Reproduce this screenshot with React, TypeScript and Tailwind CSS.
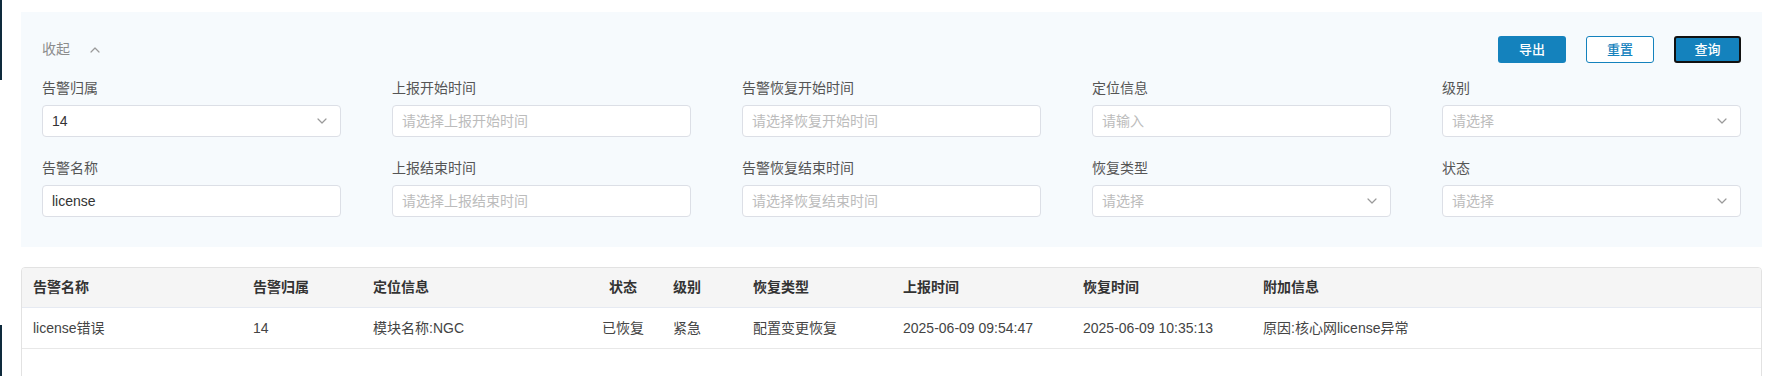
import React from 'react';

const FONT = { fontFamily: '"Liberation Sans", "Noto Sans CJK SC", sans-serif' };

const Chevron = ({ up }: { up?: boolean }) => (
  <svg width="10" height="6" viewBox="0 0 10 6" fill="none" className={up ? 'rotate-180' : ''}>
    <path d="M1 1l4 4 4-4" stroke="#9a9a9a" strokeWidth="1.2" strokeLinecap="round" strokeLinejoin="round" />
  </svg>
);

type Field = { label: string; value?: string; placeholder?: string; select?: boolean };

const FIELDS: Field[] = [
  { label: '告警归属', value: '14', select: true },
  { label: '上报开始时间', placeholder: '请选择上报开始时间' },
  { label: '告警恢复开始时间', placeholder: '请选择恢复开始时间' },
  { label: '定位信息', placeholder: '请输入' },
  { label: '级别', placeholder: '请选择', select: true },
  { label: '告警名称', value: 'license' },
  { label: '上报结束时间', placeholder: '请选择上报结束时间' },
  { label: '告警恢复结束时间', placeholder: '请选择恢复结束时间' },
  { label: '恢复类型', placeholder: '请选择', select: true },
  { label: '状态', placeholder: '请选择', select: true },
];

const COLS = [
  { key: 'name', title: '告警名称', w: 'w-[220px]' },
  { key: 'owner', title: '告警归属', w: 'w-[120px]' },
  { key: 'loc', title: '定位信息', w: 'w-[200px]' },
  { key: 'status', title: '状态', w: 'w-[100px]', right: true },
  { key: 'level', title: '级别', w: 'w-[80px]' },
  { key: 'type', title: '恢复类型', w: 'w-[150px]' },
  { key: 'report', title: '上报时间', w: 'w-[180px]' },
  { key: 'recover', title: '恢复时间', w: 'w-[180px]' },
  { key: 'extra', title: '附加信息', w: 'flex-1' },
];

const ROWS: Record<string, string>[] = [
  {
    name: 'license错误',
    owner: '14',
    loc: '模块名称:NGC',
    status: '已恢复',
    level: '紧急',
    type: '配置变更恢复',
    report: '2025-06-09 09:54:47',
    recover: '2025-06-09 10:35:13',
    extra: '原因:核心网license异常',
  },
];

const FormField = ({ f }: { f: Field }) => (
  <div className="flex flex-col">
    <label className="text-[14px] leading-[20px] text-[#555] mb-[7px]">{f.label}</label>
    <div className="h-[32px] bg-white border border-[#dcdfe6] rounded-[4px] flex items-center justify-between pl-[9px] pr-[13px]">
      {f.value ? (
        <span className="text-[14px] text-[#333]">{f.value}</span>
      ) : (
        <span className="text-[14px] text-[#bcbcbc]">{f.placeholder}</span>
      )}
      {f.select && <Chevron />}
    </div>
  </div>
);

export default function App() {
  return (
    <div className="relative w-full h-[376px] bg-white overflow-hidden pl-[21px] pr-[13px] pt-[12px]" style={FONT}>
      <div className="absolute left-0 top-0 w-[2px] h-[80px] bg-[#0e2a3c]" />
      <div className="absolute left-0 top-[325px] w-[2px] h-[60px] bg-[#0e2a3c]" />

      <div className="bg-[#f6fafd] px-[21px] pt-[24px] pb-[30px]">
        <div className="flex items-center justify-between h-[27px]">
          <button className="flex items-center gap-[20px] text-[14px] text-[#8c8c8c]">
            收起 <Chevron up />
          </button>
          <div className="flex gap-[20px]">
            <button className="w-[68px] h-[27px] rounded-[3px] bg-[#1482bd] text-white text-[13px] font-medium">导出</button>
            <button className="w-[68px] h-[27px] rounded-[3px] bg-white border border-[#1482bd] text-[#1482bd] text-[13px] font-medium">重置</button>
            <button className="w-[67px] h-[27px] rounded-[3px] bg-[#1482bd] border-2 border-[#111] text-white text-[13px] font-medium">查询</button>
          </div>
        </div>
        <div className="grid grid-cols-5 gap-x-[51px] gap-y-[21px] mt-[15px]">
          {FIELDS.map(f => (
            <FormField key={f.label} f={f} />
          ))}
        </div>
      </div>

      <div className="mt-[20px] h-[140px] border border-[#e2e2e2] rounded-[4px] overflow-hidden">
        <div className="flex h-[40px] items-center bg-[#f5f5f5] border-b border-[#e6eaf2] text-[14px] font-bold text-[#333]">
          {COLS.map(c => (
            <div key={c.key} className={`${c.w} shrink-0 ${c.right ? 'text-right pr-[25px]' : 'pl-[11px]'}`}>
              {c.title}
            </div>
          ))}
        </div>
        {ROWS.map((r, i) => (
          <div key={i} className="flex h-[41px] items-center border-b border-[#e8e8e8] text-[14px] text-[#444]">
            {COLS.map(c => (
              <div key={c.key} className={`${c.w} shrink-0 ${c.right ? 'text-right pr-[18px]' : 'pl-[11px]'}`}>
                {r[c.key]}
              </div>
            ))}
          </div>
        ))}
      </div>
    </div>
  );
}
